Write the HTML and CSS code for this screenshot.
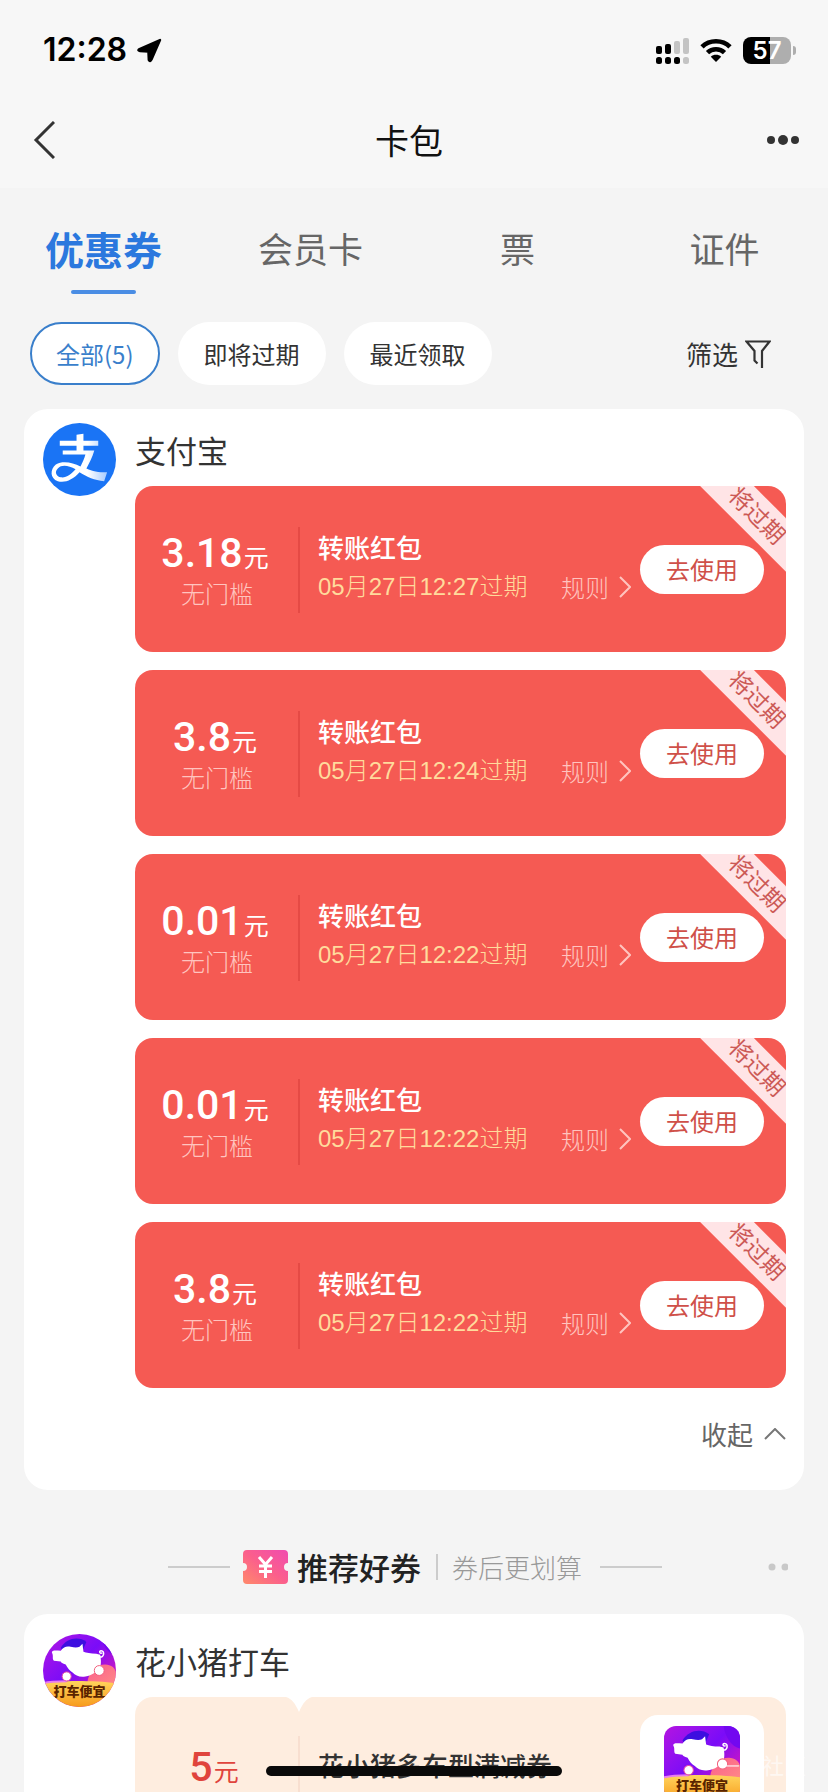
FILE: index.html
```html
<!DOCTYPE html>
<html lang="zh-CN">
<head>
<meta charset="utf-8">
<meta name="viewport" content="width=device-width, initial-scale=1">
<title>卡包</title>
<link rel="stylesheet" href="styles.css">
</head>
<body>
<div class="screen">
  <svg class="defs" width="0" height="0" aria-hidden="true">
    <defs>
      <linearGradient id="pig-sky" x1="0" y1="0" x2="1" y2="1">
        <stop offset="0" stop-color="#b414e0"/><stop offset=".2" stop-color="#9a12ec"/><stop offset=".45" stop-color="#7a0cf8"/><stop offset=".75" stop-color="#c416c8"/><stop offset="1" stop-color="#ee1690"/>
      </linearGradient>
      <linearGradient id="pig-gold" x1="0" y1="0" x2="0" y2="1">
        <stop offset="0" stop-color="#ffd45c"/><stop offset="1" stop-color="#f79a1c"/>
      </linearGradient>
      <linearGradient id="pig-hill" x1="0" y1="0" x2="1" y2="1">
        <stop offset="0" stop-color="#fb5f8c"/><stop offset="1" stop-color="#ff8a86"/>
      </linearGradient>
      <symbol id="pig" viewBox="0 0 74 74">
        <rect width="74" height="74" fill="url(#pig-sky)"/>
        <path d="M18 14C24 4 36 2 44 8L41 15 20 17Z" fill="#3d0fe0"/>
        <path d="M58 0H74V22C66 20 60 12 58 0Z" fill="#7208f0"/>
        <path d="M45 49C46 39 54 31 63 31C69 31 74 35 74 40V54H45Z" fill="url(#pig-hill)"/>
        <path d="M0 50C16 47 52 47 74 50V74H0Z" fill="url(#pig-gold)"/>
        <path d="M0 50C8 48 16 48 24 48" fill="none" stroke="#e87cf0" stroke-width="2"/>
        <path d="M9 19C9 16 13 17 18 17C21 13 24 12 28 13C32 14 35 14 37 13L40 10 41 18C44 19 48 20 54 20L58 21C59 26 59 31 58 33C54 39 50 42 43 43C37 44 33 42 30 39C27 37 25 35 23 31C20 30 18 29 18 28L11 27C9 25 11 22 9 19Z" fill="#fff"/>
        <path d="M57 23C62 25 63 17 59 17C56 17 58 21 60 19" fill="none" stroke="#fff" stroke-width="1.500"/>
        <circle cx="24" cy="43" r="4.600" fill="#fff" stroke="#e54aa4"/>
        <circle cx="57" cy="37" r="5" fill="#fff" stroke="#f2607c"/>
      </symbol>
    </defs>
  </svg>

  <header class="top">
    <div class="status">
      <div class="status-left">
        <span class="time">12:28</span>
        <svg width="25" height="25" viewBox="0 0 25 25"><path d="M23 2 14.500 21.500Q13 24.500 11.800 22L11.400 13.500 3 13Q0 12.500 2.500 11Z" stroke="#000" stroke-width="2.400" stroke-linejoin="round"/></svg>
      </div>
      <div class="status-right">
        <svg width="33" height="27" viewBox="0 0 33 27">
          <g fill="#000"><rect y="9" width="6" height="8" rx="2"/><rect x="9" y="7" width="6" height="10" rx="2"/><rect y="20" width="6" height="7" rx="2.5"/><rect x="9" y="20" width="6" height="7" rx="2.5"/><rect x="18" y="20" width="6" height="7" rx="2.5"/></g>
          <g fill="#c4c4c4"><rect x="18" y="4" width="6" height="13" rx="2"/><rect x="27" y="1" width="6" height="16" rx="2"/><rect x="27" y="20" width="6" height="7" rx="2.5"/></g>
        </svg>
        <svg width="32" height="25" viewBox="0 0 32 25"><g fill="none" stroke="#000" stroke-width="4.6"><path d="M2 8.8C9.5 1.3 22.5 1.3 30 8.8"/><path d="M7.5 14.6C12 10.2 20 10.2 24.500 14.600"/></g><path d="M10.800 18.700C13.600 16.100 18.400 16.100 21.200 18.700L16 24Z"/></svg>
        <div class="battery"><span>57</span></div>
      </div>
    </div>
    <nav class="nav">
      <button class="icon-btn" aria-label="返回"><svg width="22" height="38" viewBox="0 0 22 38"><path d="M21 1 3 19 21 37" fill="none" stroke="#333" stroke-width="3"/></svg></button>
      <h1>卡包</h1>
      <button class="icon-btn more" aria-label="更多"><svg width="32" height="10" viewBox="0 0 32 10" fill="#333"><circle cx="4" cy="5" r="4"/><circle cx="16" cy="5" r="5"/><circle cx="28" cy="5" r="4"/></svg></button>
    </nav>
  </header>

  <div class="tabs" role="tablist">
    <button class="tab active" role="tab" aria-selected="true">优惠券</button>
    <button class="tab" role="tab">会员卡</button>
    <button class="tab" role="tab">票</button>
    <button class="tab" role="tab">证件</button>
  </div>

  <div class="filters">
    <button class="pill on">全部(5)</button>
    <button class="pill">即将过期</button>
    <button class="pill">最近领取</button>
    <button class="filter">筛选<svg width="26" height="28" viewBox="0 0 26 28"><path d="M12.500 23.500 9.500 20.500V11L1.500 1.500H24.500L17 11V28" fill="none" stroke="#333" stroke-width="2.200"/></svg></button>
  </div>

  <main>
    <section class="card">
      <svg class="avatar" viewBox="0 0 74 74" role="img" aria-label="支付宝">
        <defs><linearGradient id="zfb" x1="0" y1="0" x2="1" y2="0"><stop offset="0" stop-color="#fff"/><stop offset=".65" stop-color="#fff"/><stop offset="1" stop-color="#a5cbff"/></linearGradient></defs>
        <circle cx="37" cy="37" r="37" fill="#1a74f5"/>
        <path d="M17 18H34V12L41 11V18H56V23H41V28H52C50 35 47 41 44 46C50 49 56 50 65 50L62 59C52 58 45 55 37 50C30 58 22 61 15 59C7 56 7 47 13 42C20 38 30 40 38 44C40 40 42 36 43 32H20V28H34V23H17Z M33 47C26 43 19 42 15 46C11 50 14 54 18 55C23 56 29 52 33 47Z" fill="url(#zfb)" fill-rule="evenodd"/>
      </svg>
      <div class="card-body">
        <h2>支付宝</h2>
        <ul class="coupons">
          <li class="coupon">
            <div class="amount"><div class="price"><b>3.18</b>元</div><div class="cond">无门槛</div></div>
            <div class="info"><h3>转账红包</h3><div class="meta"><span class="date">05月27日12:27过期</span><a class="rule" href="#">规则<svg width="12" height="22" viewBox="0 0 12 22"><path d="M1 1 11 11 1 21"/></svg></a></div></div>
            <button class="use">去使用</button><span class="ribbon">将过期</span>
          </li>
          <li class="coupon">
            <div class="amount"><div class="price"><b>3.8</b>元</div><div class="cond">无门槛</div></div>
            <div class="info"><h3>转账红包</h3><div class="meta"><span class="date">05月27日12:24过期</span><a class="rule" href="#">规则<svg width="12" height="22" viewBox="0 0 12 22"><path d="M1 1 11 11 1 21"/></svg></a></div></div>
            <button class="use">去使用</button><span class="ribbon">将过期</span>
          </li>
          <li class="coupon">
            <div class="amount"><div class="price"><b>0.01</b>元</div><div class="cond">无门槛</div></div>
            <div class="info"><h3>转账红包</h3><div class="meta"><span class="date">05月27日12:22过期</span><a class="rule" href="#">规则<svg width="12" height="22" viewBox="0 0 12 22"><path d="M1 1 11 11 1 21"/></svg></a></div></div>
            <button class="use">去使用</button><span class="ribbon">将过期</span>
          </li>
          <li class="coupon">
            <div class="amount"><div class="price"><b>0.01</b>元</div><div class="cond">无门槛</div></div>
            <div class="info"><h3>转账红包</h3><div class="meta"><span class="date">05月27日12:22过期</span><a class="rule" href="#">规则<svg width="12" height="22" viewBox="0 0 12 22"><path d="M1 1 11 11 1 21"/></svg></a></div></div>
            <button class="use">去使用</button><span class="ribbon">将过期</span>
          </li>
          <li class="coupon">
            <div class="amount"><div class="price"><b>3.8</b>元</div><div class="cond">无门槛</div></div>
            <div class="info"><h3>转账红包</h3><div class="meta"><span class="date">05月27日12:22过期</span><a class="rule" href="#">规则<svg width="12" height="22" viewBox="0 0 12 22"><path d="M1 1 11 11 1 21"/></svg></a></div></div>
            <button class="use">去使用</button><span class="ribbon">将过期</span>
          </li>
        </ul>
        <button class="fold">收起<svg width="22" height="12" viewBox="0 0 22 12"><path d="M1 11 11 1 21 11" fill="none" stroke="#777" stroke-width="2"/></svg></button>
      </div>
    </section>

    <div class="recommend">
      <i class="rule-line"></i>
      <svg class="ticket" width="45" height="34" viewBox="0 0 45 34">
        <defs><linearGradient id="tk" x1="0" y1="1" x2="1" y2="0"><stop offset="0" stop-color="#ff8a6a"/><stop offset=".5" stop-color="#fb5f8c"/><stop offset="1" stop-color="#f04bb0"/></linearGradient></defs>
        <path d="M4 0H41Q45 0 45 4V13A4 4 0 0 0 45 21V30Q45 34 41 34H4Q0 34 0 30V21A4 4 0 0 0 0 13V4Q0 0 4 0Z" fill="url(#tk)"/>
        <path d="M16 7 22.500 14.500 29 7M22.500 14.500V28M16 16H29M16 21.500H29" fill="none" stroke="#fff" stroke-width="3"/>
      </svg>
      <strong>推荐好券</strong>
      <i class="bar"></i>
      <span>券后更划算</span>
      <i class="rule-line"></i>
      <svg class="dots" width="20" height="8" viewBox="0 0 20 8" fill="#c8c8c8"><circle cx="4" cy="4" r="3.500"/><circle cx="17" cy="4" r="3.500"/></svg>
    </div>

    <section class="card second">
      <div class="avatar pig-logo"><svg viewBox="0 0 74 74"><use href="#pig"/></svg><span>打车便宜</span></div>
      <div class="card-body">
        <h2>花小猪打车</h2>
        <div class="coupon peach">
          <svg class="notch" width="26" height="15" viewBox="0 0 26 15"><path d="M0 0C6 2 9 6 13 15C17 6 20 2 26 0Z" fill="#fff"/></svg>
          <div class="amount"><div class="price"><b>5</b>元</div></div>
          <div class="info"><h3>花小猪多车型满减券</h3></div>
          <div class="thumb"><div class="thumb-pic"><svg viewBox="0 0 74 74"><use href="#pig"/></svg><span>打车便宜</span></div></div>
        </div>
      </div>
    </section>
  </main>
  <div class="watermark">一欢社区</div>
  <div class="home"></div>
</div>
</body>
</html>
```

FILE: styles.css
```css
* { box-sizing: border-box; margin: 0; padding: 0; }
body { background: #f4f4f4; color: #333; font-family: "Noto Sans CJK SC", sans-serif; }
button { border: 0; background: none; font: inherit; color: inherit; }
ul { list-style: none; }
svg { display: block; flex: none; }
.defs { position: absolute; }
.screen { position: relative; height: 100vh; overflow: hidden; }

.top { background: #f7f7f7; padding-bottom: 8px; }
.status { display: flex; justify-content: space-between; height: 100px; padding: 0 32px 0 43px; align-items: center; }
.status-left, .status-right { display: flex; align-items: center; }
.status-left { gap: 10px; }
.status-right { gap: 11px; }
.time { font: 600 32px/40px Inter, sans-serif; color: #000; }
.battery { position: relative; width: 48px; height: 27px; margin-right: 5px; border-radius: 8px; background: linear-gradient(90deg, #000 56%, #aeaeae 56%); display: grid; place-items: center; font: 600 24px/27px Inter, sans-serif; color: #fff; }
.battery::after { content: ""; position: absolute; right: -5px; top: 9px; width: 3px; height: 9px; border-radius: 0 4px 4px 0; background: #aeaeae; }
.nav { display: grid; grid-template-columns: 1fr auto 1fr; align-items: center; height: 80px; padding: 0 29px 0 33px; }
.nav h1 { padding-right: 14px; font-size: 34px; line-height: 48px; font-weight: 400; color: #111; }
.more { justify-self: end; }

.tabs { display: grid; grid-template-columns: repeat(4, 1fr); height: 106px; }
.tab { position: relative; font-size: 35px; line-height: 60px; color: #666; padding: 30px 0 16px; }
.tab.active { font-size: 39px; font-weight: 700; color: #2b78de; }
.tab.active::after { content: ""; position: absolute; left: 50%; bottom: 0; width: 65px; height: 4px; margin-left: -33px; border-radius: 2px; background: #4a8de4; }

.filters { display: flex; align-items: center; gap: 18px; padding: 28px 57px 24px 30px; }
.pill { height: 63px; padding: 0 26px; border-radius: 32px; background: #fff; font-size: 24px; line-height: 36px; color: #333; }
.pill.on { padding: 0 24px; border: 2px solid #3a7fcb; color: #3a7fcb; }
.filter { display: flex; align-items: center; gap: 7px; margin-left: auto; font-size: 26px; line-height: 36px; }

main { padding: 0 24px; }
.card { display: flex; align-items: flex-start; gap: 19px; padding: 14px 18px 36px 19px; border-radius: 24px; background: #fff; }
.avatar { flex: none; width: 73px; height: 73px; }
.card-body { flex: 1; min-width: 0; }
h2 { font-size: 31px; line-height: 40px; font-weight: 400; color: #333; padding: 7px 0 16px; }
.coupons { display: grid; gap: 18px; }
.coupon { position: relative; display: flex; align-items: center; height: 166px; padding-right: 22px; border-radius: 18px; overflow: hidden; background: #f55a53; color: #fff; }
.amount { width: 164px; flex: none; text-align: center; }
.price { font-size: 25px; line-height: 44px; padding-right: 4px; }
.price b { font: 500 41px/44px Roboto, sans-serif; margin-right: 1px; }
.cond { font-size: 24px; line-height: 30px; font-weight: 300; color: #ffc4bf; }
.info { position: relative; flex: 1; min-width: 0; padding: 0 0 4px 19px; }
.info::before { content: ""; position: absolute; left: -1px; top: 0; width: 2px; height: 86px; background: #e54a45; }
.info h3 { font-size: 26px; line-height: 40px; font-weight: 500; white-space: nowrap; }
.meta { display: flex; justify-content: space-between; align-items: center; padding-right: 9px; font-size: 24px; line-height: 40px; font-weight: 300; white-space: nowrap; }
.date { font-family: "Liberation Sans", "Noto Sans CJK SC", sans-serif; color: #ffdb9c; }
.rule { display: flex; align-items: center; gap: 10px; color: #ffc4bf; text-decoration: none; }
.rule path { fill: none; stroke: #ffc4bf; stroke-width: 2; }
.use { width: 124px; height: 49px; border-radius: 25px; background: #fff; color: #cf5049; font-size: 24px; line-height: 36px; }
.ribbon { position: absolute; top: 10px; right: -40px; width: 140px; height: 38px; padding-left: 2px; transform: rotate(45deg); background: #ffe4e6; color: #cc5a56; font-size: 23px; line-height: 34px; text-align: center; }
.fold { display: flex; align-items: center; gap: 11px; margin: 26px 0 0 auto; font-size: 26px; line-height: 40px; color: #666; }

.recommend { position: relative; display: flex; align-items: center; justify-content: center; height: 124px; padding: 29px 0 0 2px; }
.rule-line { width: 62px; height: 2px; background: #ccc; }
.ticket { margin: 0 9px 0 13px; }
.recommend strong { font-size: 31px; line-height: 40px; font-weight: 500; color: #222; }
.bar { width: 2px; height: 26px; margin: 0 14px 0 15px; background: #ccc; }
.recommend span { font-size: 26px; line-height: 40px; font-weight: 300; color: #999; margin-right: 18px; }
.dots { position: absolute; right: 16px; top: 73px; }

.second { padding-top: 20px; }
.pig-logo { position: relative; border-radius: 50%; overflow: hidden; }
.pig-logo span, .thumb-pic span { position: absolute; left: 0; right: 0; bottom: 8px; text-align: center; font-size: 13px; line-height: 16px; font-weight: 900; color: #5a2400; white-space: nowrap; }
.peach { align-items: flex-start; background: #feeddf; color: #333; }
.peach .amount { padding-top: 48px; }
.peach .price { padding: 0 6px 0 0; color: #e0443c; }
.peach .info { padding-top: 48px; }
.peach .info::before { top: 39px; background: #f8dfd0; }
.notch { position: absolute; left: 151px; top: 0; }
.thumb { width: 124px; height: 124px; margin-top: 18px; padding: 11px 24px; border-radius: 18px; background: #fff; }
.thumb-pic { position: relative; height: 75px; border-radius: 12px; overflow: hidden; }
.watermark { position: absolute; right: 22px; bottom: 14px; font-size: 22px; line-height: 28px; color: rgba(255, 255, 255, .6); }
.home { position: absolute; left: 50%; bottom: 16px; width: 296px; height: 10px; margin-left: -148px; border-radius: 5px; background: #0a0a0a; }
```
